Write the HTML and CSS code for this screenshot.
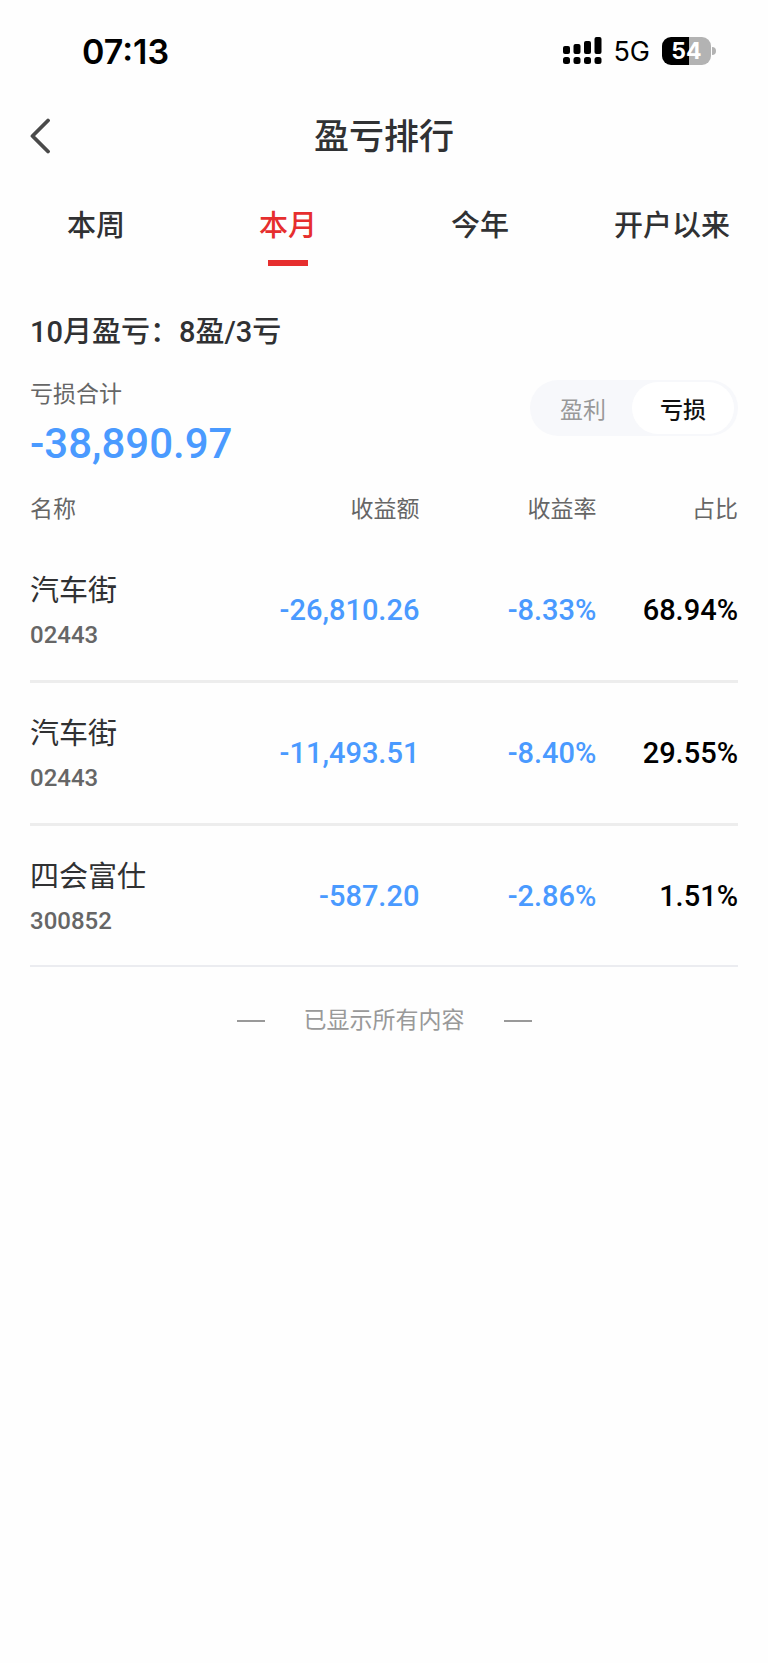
FILE: index.html
```html
<!DOCTYPE html>
<html lang="zh-CN">
<head>
    <meta charset="UTF-8">
    <meta name="viewport" content="width=device-width, initial-scale=1.0">
    <title>盈亏排行</title>
    <link rel="stylesheet" href="styles.css">
</head>
<body>

<!-- 状态栏 -->
<div class="status-bar">
    <span class="time">07:13</span>
    <div class="status-icons">
        <svg class="signal" width="39" height="28" viewBox="0 0 39 28">
            <rect x="0" y="9" width="7" height="8" rx="2"/>
            <rect x="10.5" y="7" width="7" height="10" rx="2"/>
            <rect x="21" y="4" width="7" height="13" rx="2"/>
            <rect x="31.5" y="0" width="7" height="17" rx="2"/>
            <rect x="0" y="20" width="7" height="7" rx="2.5"/>
            <rect x="10.5" y="20" width="7" height="7" rx="2.5"/>
            <rect x="21" y="20" width="7" height="7" rx="2.5"/>
            <rect x="31.5" y="20" width="7" height="7" rx="2.5"/>
        </svg>
        <span class="network">5G</span>
        <div class="battery"><span class="battery-level">54</span></div>
    </div>
</div>

<!-- 标题栏 -->
<header class="nav-bar">
    <button class="back-btn" aria-label="返回">
        <svg width="20" height="36" viewBox="0 0 20 36">
            <path d="M18 2.5L2.5 18L18 33.5" fill="none" stroke="#4a4a4a" stroke-width="3.8" stroke-linecap="round" stroke-linejoin="round"/>
        </svg>
    </button>
    <h1>盈亏排行</h1>
</header>

<nav class="tabs">
    <button class="tab">本周</button>
    <button class="tab active">本月</button>
    <button class="tab">今年</button>
    <button class="tab">开户以来</button>
</nav>

<main class="content">
    <h2>10月盈亏：8盈/3亏</h2>

    <div class="summary">
        <div>
            <div class="summary-label">亏损合计</div>
            <div class="summary-total">-38,890.97</div>
        </div>
        <div class="switch">
            <button class="switch-btn">盈利</button>
            <button class="switch-btn selected">亏损</button>
        </div>
    </div>

    <table>
        <thead>
            <tr>
                <th class="name">名称</th>
                <th class="amount">收益额</th>
                <th class="rate">收益率</th>
                <th class="share">占比</th>
            </tr>
        </thead>
        <tbody>
            <tr>
                <td class="name">汽车街<span class="code">02443</span></td>
                <td class="loss">-26,810.26</td>
                <td class="loss">-8.33%</td>
                <td>68.94%</td>
            </tr>
            <tr>
                <td class="name">汽车街<span class="code">02443</span></td>
                <td class="loss">-11,493.51</td>
                <td class="loss">-8.40%</td>
                <td>29.55%</td>
            </tr>
            <tr>
                <td class="name">四会富仕<span class="code">300852</span></td>
                <td class="loss">-587.20</td>
                <td class="loss">-2.86%</td>
                <td>1.51%</td>
            </tr>
        </tbody>
    </table>

    <div class="list-end">已显示所有内容</div>
</main>

</body>
</html>
```

FILE: styles.css
```css
* {
    box-sizing: border-box;
}
body {
    margin: 0;
    background-color: #fefefe;
    color: #303133;
    font-family: Roboto, "Noto Sans CJK SC", sans-serif;
}
button {
    border: none;
    padding: 0;
    background: none;
    color: inherit;
    font-family: inherit;
    cursor: pointer;
}

/* 状态栏 */
.status-bar {
    display: flex;
    justify-content: space-between;
    align-items: center;
    height: 102px;
    padding: 0 52px 0 82px;
    color: #000;
    font-family: Inter, sans-serif;
}
.time {
    font-size: 34px;
    font-weight: 600;
}
.status-icons {
    display: flex;
    align-items: center;
}
.network {
    margin: 0 12px 0 11px;
    font-size: 27px;
}
.battery {
    position: relative;
    width: 49px;
    height: 28px;
    margin-right: 5px;
    border-radius: 9px;
    background: linear-gradient(to right, #000 55%, #b3b3b3 55%);
    text-align: center;
}
.battery::after {
    content: "";
    position: absolute;
    right: -5px;
    top: 10px;
    width: 4px;
    height: 8px;
    border-radius: 0 4px 4px 0;
    background-color: #b3b3b3;
}
.battery-level {
    color: #fff;
    font-size: 23px;
    font-weight: 700;
    line-height: 28px;
}

/* 标题栏 */
.nav-bar {
    position: relative;
    display: flex;
    justify-content: center;
    align-items: center;
    height: 72px;
}
.back-btn {
    position: absolute;
    left: 30px;
    top: 16px;
    height: 36px;
}
.back-btn svg {
    display: block;
}
h1 {
    margin: 0;
    font-size: 35px;
    font-weight: 500;
    line-height: 48px;
}

.tabs {
    display: grid;
    grid-template-columns: repeat(4, 1fr);
    padding-top: 32px;
}
.tab {
    height: 60px;
    font-size: 29px;
    font-weight: 500;
    line-height: 40px;
}
.tab::after {
    content: "";
    display: block;
    width: 40px;
    height: 6px;
    margin: 14px auto 0;
}
.tab.active {
    color: #e62e2e;
}
.tab.active::after {
    background-color: #e62e2e;
}

.content {
    padding: 46px 30px 0;
}
h2 {
    margin: 0 0 28px;
    font-size: 29px;
    font-weight: 500;
    line-height: 40px;
}
.summary {
    display: flex;
    justify-content: space-between;
    align-items: flex-start;
    margin-bottom: 8px;
}
.summary-label {
    color: #666;
    font-size: 23px;
    line-height: 30px;
}
.summary-total {
    margin-top: 10px;
    color: #4a9aff;
    font-size: 42px;
    font-weight: 500;
    line-height: 48px;
}
.switch {
    display: flex;
    height: 56px;
    padding: 2px 4px;
    border-radius: 28px;
    background-color: #f7f8fb;
}
.switch-btn {
    width: 98px;
    border-radius: 26px;
    color: #999;
    font-size: 23px;
}
.switch-btn.selected {
    width: 102px;
    background-color: #fff;
    color: #111;
    font-weight: 500;
}

/* 盈亏列表 */
table {
    width: 100%;
    border-spacing: 0;
    table-layout: fixed;
}
th, td {
    padding: 0;
    text-align: right;
}
th {
    height: 64px;
    padding-bottom: 2px;
    color: #666;
    font-size: 23px;
    font-weight: 400;
}
th.name {
    width: 25%;
}
th.amount {
    width: 30%;
}
th.rate {
    width: 25%;
}
th.share {
    width: 20%;
}
td {
    height: 143px;
    border-bottom: 3px solid #ededed;
    color: #000;
    font-size: 29px;
    font-weight: 500;
}
tr:last-child td {
    height: 141px;
    border-bottom: 2px solid #ebecf0;
}
.name {
    text-align: left;
}
td.name {
    padding-top: 6px;
    color: #303133;
    font-weight: 400;
    line-height: 44px;
}
.code {
    display: block;
    color: #666;
    font-size: 24px;
    font-weight: 500;
}
.loss {
    color: #4a9aff;
}

.list-end {
    display: flex;
    justify-content: center;
    align-items: center;
    gap: 39px;
    padding: 37px 0;
    color: #999;
    font-size: 23px;
    line-height: 34px;
}
.list-end::before, .list-end::after {
    content: "";
    width: 28px;
    height: 2px;
    background-color: #999;
}
```
